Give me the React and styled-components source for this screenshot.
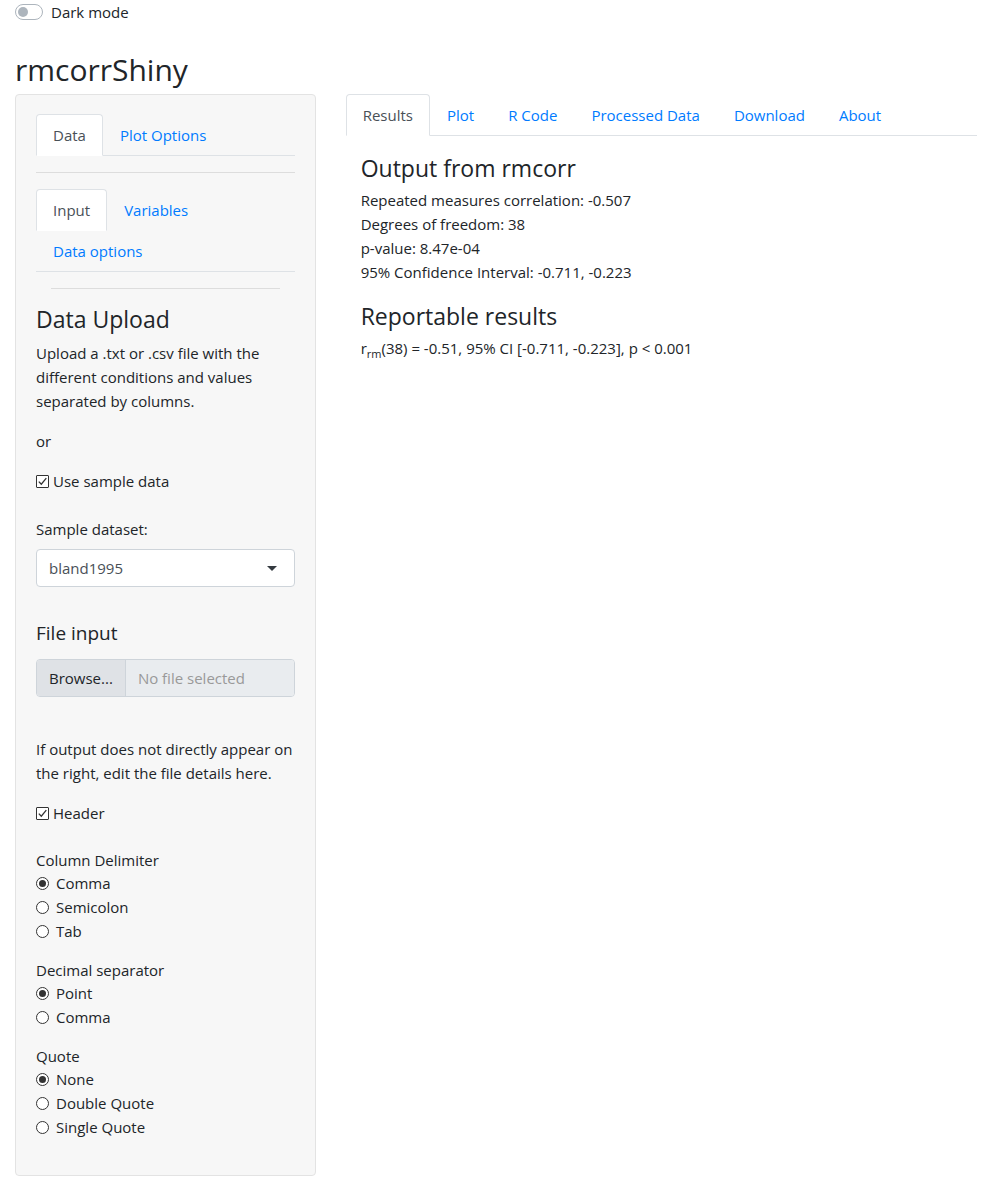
import React from 'react';
import styled, { createGlobalStyle, css } from 'styled-components';

const colors = {
  text: '#212529',
  link: '#007bff',
  border: '#dee2e6',
  wellBg: '#f7f7f7',
  wellBorder: '#e3e3e3',
  muted: '#6c757d',
};

const GlobalStyle = createGlobalStyle`
  html, body {
    margin: 0;
    padding: 0;
    background: #fff;
  }
  body {
    font-family: "Open Sans", "Noto Sans", "Liberation Sans", sans-serif;
    font-size: 15px;
    line-height: 24px;
    color: ${colors.text};
  }
  * { box-sizing: border-box; }
`;

const Container = styled.div`
  padding: 0 15px;
`;

const ToggleRow = styled.label`
  display: flex;
  align-items: center;
  gap: 8px;
  height: 24px;
`;

const SwitchTrack = styled.span`
  position: relative;
  width: 28px;
  height: 16px;
  border: 1px solid #adb5bd;
  border-radius: 8px;
  background: #fff;
  &::after {
    content: '';
    position: absolute;
    top: 2px;
    left: 2px;
    width: 10px;
    height: 10px;
    border-radius: 50%;
    background: #adb5bd;
  }
`;

const AppTitle = styled.h2`
  margin: 27px 0 5px;
  font-size: 30px;
  font-weight: 400;
  line-height: 38px;
`;

const Row = styled.div`
  display: flex;
  margin: 0 -15px;
`;

const SideCol = styled.div`
  flex: 0 0 33.3333%;
  padding: 0 15px;
`;

const MainCol = styled.div`
  flex: 0 0 66.6667%;
  padding: 0 15px;
`;

const Well = styled.div`
  background: ${colors.wellBg};
  border: 1px solid ${colors.wellBorder};
  border-radius: 4px;
  padding: 19px 20px;
  height: 1082px;
`;

const Tabs = styled.ul`
  display: flex;
  flex-wrap: wrap;
  list-style: none;
  margin: 0;
  padding: 0;
  border-bottom: 1px solid ${colors.border};
`;

const TabItem = styled.li`
  margin-bottom: -1px;
`;

const TabLink = styled.a`
  display: block;
  padding: 8px 16px;
  border: 1px solid transparent;
  border-top-left-radius: 4px;
  border-top-right-radius: 4px;
  color: ${colors.link};
  text-decoration: none;
  cursor: pointer;
  ${p => p.$active && css`
    color: #495057;
    background: #fff;
    border-color: ${colors.border} ${colors.border} #fff;
  `}
`;

const Rule = styled.hr`
  border: 0;
  border-top: 1px solid rgba(0, 0, 0, 0.1);
  margin: 16px ${p => p.$inset || 0}px;
`;

const Heading3 = styled.h3`
  margin: ${p => p.$top || 0}px 0 ${p => p.$bottom ?? 8}px;
  font-size: 23px;
  font-weight: 400;
  line-height: 29px;
`;

const Heading4 = styled.h4`
  margin: 34px 0 14px;
  font-size: 19px;
  font-weight: 400;
  line-height: 24px;
`;

const Para = styled.p`
  margin: 0 0 ${p => p.$bottom ?? 16}px;
`;

const CheckRow = styled.label`
  display: flex;
  align-items: center;
  gap: 4px;
  margin-bottom: ${p => p.$bottom ?? 24}px;
`;

const CheckBox = styled.span`
  display: inline-flex;
  align-items: center;
  justify-content: center;
  width: 13px;
  height: 13px;
  border: 1px solid #333;
  border-radius: 1px;
  background: #fff;
`;

const FieldLabel = styled.div`
  margin-bottom: ${p => p.$bottom ?? 8}px;
  line-height: ${p => p.$lh ?? 24}px;
`;

const SelectBox = styled.div`
  display: flex;
  align-items: center;
  justify-content: space-between;
  height: 38px;
  padding: 0 17px 0 12px;
  background: #fff;
  border: 1px solid #ced4da;
  border-radius: 4px;
  color: #495057;
`;

const Caret = styled.span`
  width: 0;
  height: 0;
  border-left: 5px solid transparent;
  border-right: 5px solid transparent;
  border-top: 5px solid #343a40;
`;

const FileGroup = styled.div`
  display: flex;
  height: 38px;
  border: 1px solid #ced4da;
  border-radius: 4px;
  overflow: hidden;
  margin-bottom: 40px;
`;

const BrowseButton = styled.span`
  display: flex;
  align-items: center;
  padding: 0 12px;
  background: #dfe2e6;
  color: ${colors.text};
  border-right: 1px solid #ced4da;
`;

const FileName = styled.span`
  flex: 1;
  display: flex;
  align-items: center;
  padding: 0 12px;
  background: #e9ecef;
  color: #999;
`;

const RadioGroup = styled.div`
  margin-bottom: 16px;
`;

const RadioRow = styled.label`
  display: flex;
  align-items: center;
  gap: 7px;
  height: 24px;
`;

const RadioDot = styled.span`
  position: relative;
  width: 13px;
  height: 13px;
  border: 1px solid #333;
  border-radius: 50%;
  background: #fff;
  ${p => p.$checked && css`
    &::after {
      content: '';
      position: absolute;
      top: 2px;
      left: 2px;
      width: 7px;
      height: 7px;
      border-radius: 50%;
      background: #333;
    }
  `}
`;

const TabContent = styled.div`
  padding: 0 15px;
`;

const ResultLine = styled.div`
  line-height: 24px;
`;

const Sub = styled.sub`
  font-size: 11px;
`;

const Check = () => (
  <svg width="11" height="11" viewBox="0 0 11 11">
    <path d="M1.8 5.6 L4.3 8.2 L9.3 2.2" fill="none" stroke="#333" strokeWidth="1.3" />
  </svg>
);

const Radio = ({ checked, children }) => (
  <RadioRow>
    <RadioDot $checked={checked} />
    {children}
  </RadioRow>
);

const sideTabs = ['Data', 'Plot Options'];
const innerTabs = ['Input', 'Variables', 'Data options'];
const mainTabs = ['Results', 'Plot', 'R Code', 'Processed Data', 'Download', 'About'];

const App = () => (
  <>
    <GlobalStyle />
    <Container>
      <ToggleRow>
        <SwitchTrack />
        Dark mode
      </ToggleRow>
      <AppTitle>rmcorrShiny</AppTitle>
      <Row>
        <SideCol>
          <Well>
            <Tabs>
              {sideTabs.map((t, i) => (
                <TabItem key={t}>
                  <TabLink $active={i === 0}>{t}</TabLink>
                </TabItem>
              ))}
            </Tabs>
            <Rule />
            <Tabs>
              {innerTabs.map((t, i) => (
                <TabItem key={t}>
                  <TabLink $active={i === 0}>{t}</TabLink>
                </TabItem>
              ))}
            </Tabs>
            <Rule $inset={15} />
            <Heading3 $top={3} $bottom={7}>Data Upload</Heading3>
            <Para>
              Upload a .txt or .csv file with the different conditions and values separated by columns.
            </Para>
            <Para>or</Para>
            <CheckRow>
              <CheckBox><Check /></CheckBox>
              Use sample data
            </CheckRow>
            <FieldLabel>Sample dataset:</FieldLabel>
            <SelectBox>
              bland1995
              <Caret />
            </SelectBox>
            <Heading4>File input</Heading4>
            <FileGroup>
              <BrowseButton>Browse...</BrowseButton>
              <FileName>No file selected</FileName>
            </FileGroup>
            <Para>If output does not directly appear on the right, edit the file details here.</Para>
            <CheckRow>
              <CheckBox><Check /></CheckBox>
              Header
            </CheckRow>
            <RadioGroup>
              <FieldLabel $bottom={0} $lh={22}>Column Delimiter</FieldLabel>
              <Radio checked>Comma</Radio>
              <Radio>Semicolon</Radio>
              <Radio>Tab</Radio>
            </RadioGroup>
            <RadioGroup>
              <FieldLabel $bottom={0} $lh={22}>Decimal separator</FieldLabel>
              <Radio checked>Point</Radio>
              <Radio>Comma</Radio>
            </RadioGroup>
            <RadioGroup>
              <FieldLabel $bottom={0} $lh={22}>Quote</FieldLabel>
              <Radio checked>None</Radio>
              <Radio>Double Quote</Radio>
              <Radio>Single Quote</Radio>
            </RadioGroup>
          </Well>
        </SideCol>
        <MainCol>
          <Tabs>
            {mainTabs.map((t, i) => (
              <TabItem key={t}>
                <TabLink $active={i === 0}>{t}</TabLink>
              </TabItem>
            ))}
          </Tabs>
          <TabContent>
            <Heading3 $top={18} $bottom={5}>Output from rmcorr</Heading3>
            <ResultLine>Repeated measures correlation: -0.507</ResultLine>
            <ResultLine>Degrees of freedom: 38</ResultLine>
            <ResultLine>p-value: 8.47e-04</ResultLine>
            <ResultLine>95% Confidence Interval: -0.711, -0.223</ResultLine>
            <Heading3 $top={18} $bottom={5}>Reportable results</Heading3>
            <ResultLine>
              r<Sub>rm</Sub>(38) = -0.51, 95% CI [-0.711, -0.223], p &lt; 0.001
            </ResultLine>
          </TabContent>
        </MainCol>
      </Row>
    </Container>
  </>
);

export default App;
